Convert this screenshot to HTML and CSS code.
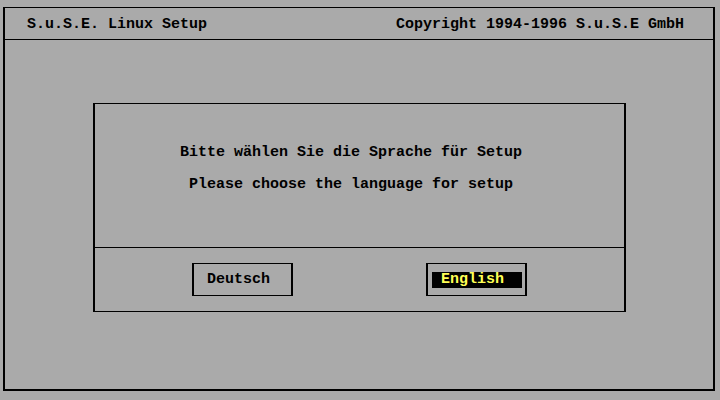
FILE: index.html
```html
<!DOCTYPE html>
<html lang="de">
<head>
    <meta charset="UTF-8">
    <meta name="viewport" content="width=device-width, initial-scale=1.0">
    <title>S.u.S.E. Linux Setup</title>
    <link rel="stylesheet" href="styles.css">
</head>
<body>
    <div class="screen">
        <header class="topbar">
            <div class="title">S.u.S.E. Linux Setup</div>
            <div class="copyright">Copyright 1994-1996 S.u.S.E GmbH</div>
        </header>

        <div class="dialog">
            <div class="message">
                <p>Bitte wählen Sie die Sprache für Setup</p>
                <p class="second">Please choose the language for setup</p>
            </div>
            <div class="buttons">
                <div class="btn">
                    <span class="label">Deutsch</span>
                </div>
                <div class="btn btn-active">
                    <span class="label">English</span>
                </div>
            </div>
        </div>
    </div>
</body>
</html>
```

FILE: styles.css
```css
* {
    margin: 0;
    padding: 0;
    box-sizing: border-box;
}

body {
    background: #aaaaaa;
    color: #000;
    font-family: 'Liberation Mono', 'DejaVu Sans Mono', monospace;
    font-weight: 700;
    font-size: 15px;
    line-height: 16px;
    width: 720px;
    height: 400px;
    overflow: hidden;
    white-space: nowrap;
}

.screen {
    margin: 7px 0 0 3px;
    width: 712px;
    height: 384px;
    border-top: 1px solid #000;
    border-bottom: 2px solid #000;
    border-left: 2px solid #000;
    border-right: 2px solid #000;
}

.topbar {
    display: flex;
    justify-content: space-between;
    padding: 9px 29px 6px 22px;
    border-bottom: 1px solid #000;
}

/* dialog box */
.dialog {
    margin: 63px 0 0 88px;
    width: 533px;
    height: 209px;
    border-top: 1px solid #000;
    border-bottom: 1px solid #000;
    border-left: 2px solid #000;
    border-right: 2px solid #000;
}

.message {
    height: 144px;
    padding: 41px 17px 0 0;
    border-bottom: 1px solid #000;
    text-align: center;
}

.message .second {
    margin-top: 16px;
}

.buttons {
    display: flex;
    gap: 133px;
    padding: 15px 0 0 97px;
}

.btn {
    width: 101px;
    height: 33px;
    border-top: 1px solid #000;
    border-bottom: 1px solid #000;
    border-left: 2px solid #000;
    border-right: 2px solid #000;
    padding: 8px 0 0 13px;
}

.btn-active {
    padding-left: 4px;
}

.btn-active .label {
    display: block;
    width: 90px;
    height: 16px;
    padding-left: 9px;
    background: #000;
    color: #ffff55;
}
```
